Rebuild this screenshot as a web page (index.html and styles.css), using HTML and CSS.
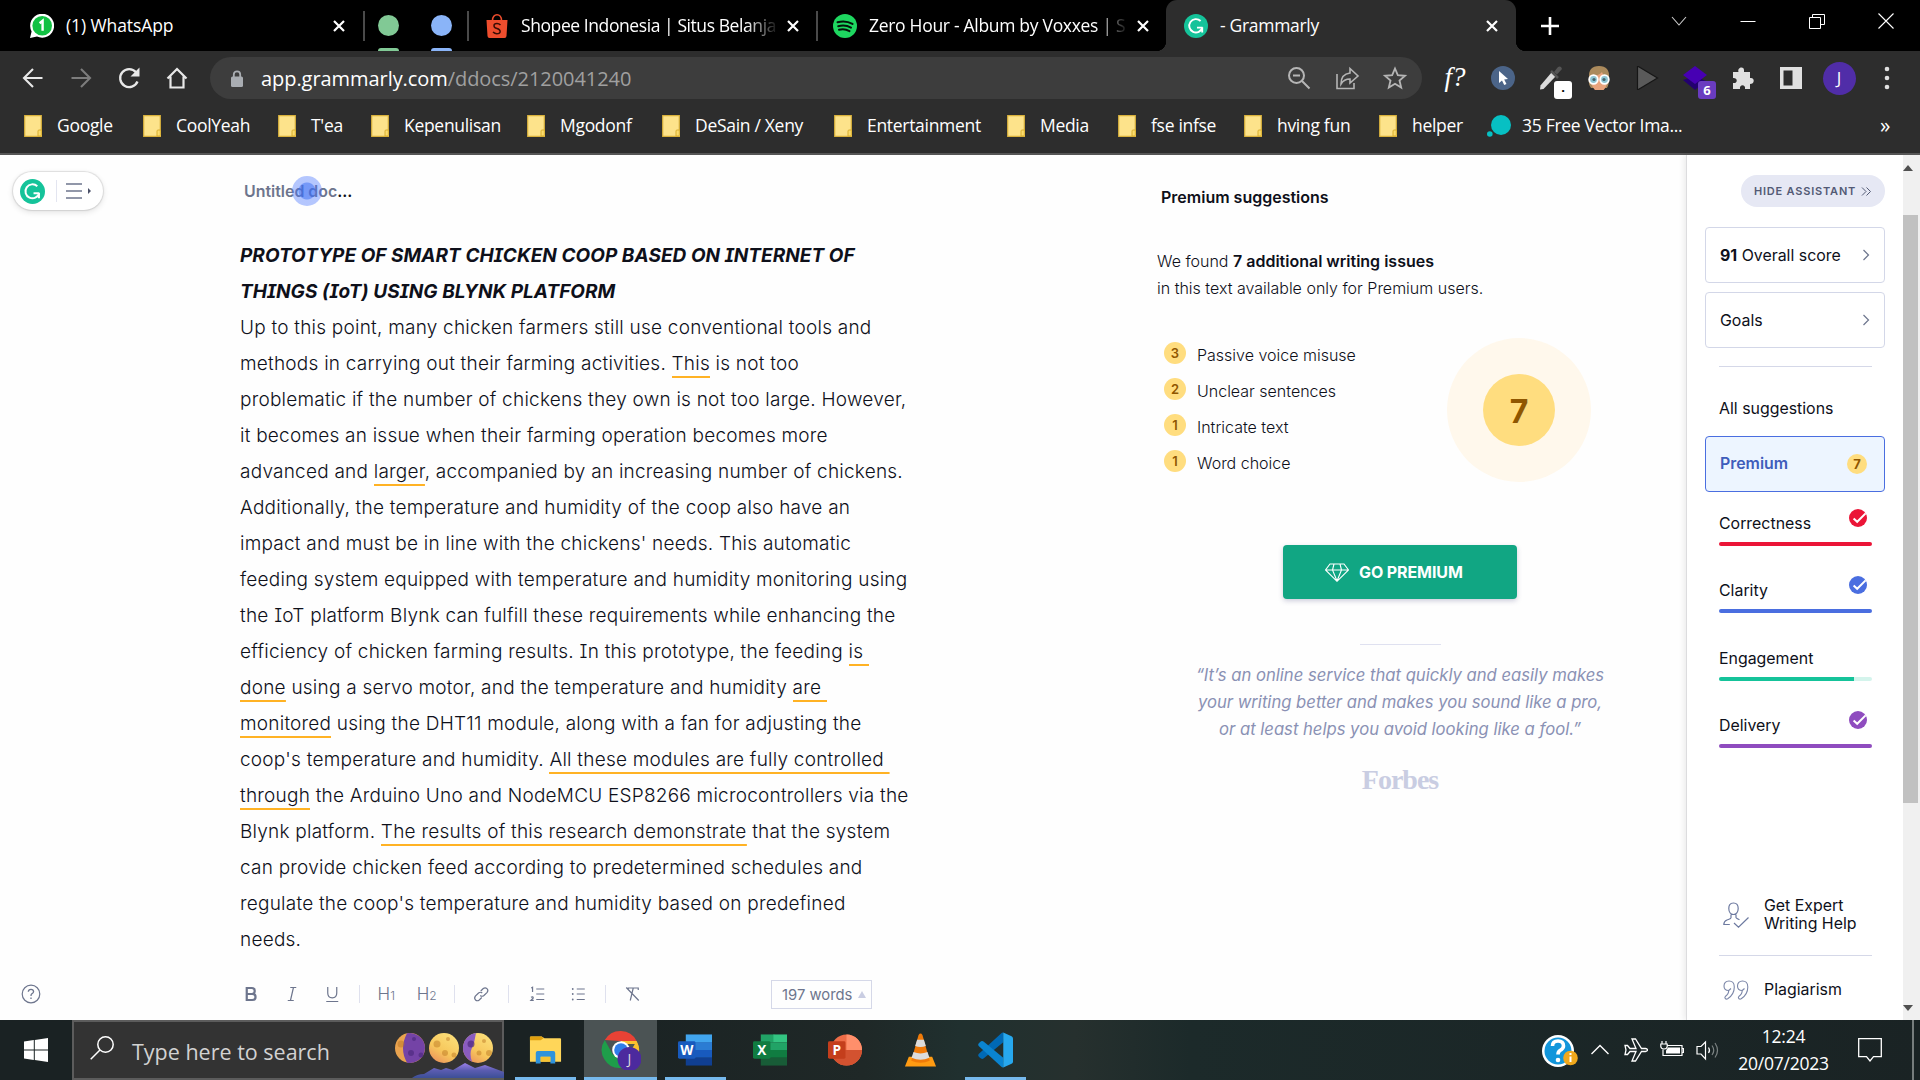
FILE: index.html
```html
<!DOCTYPE html>
<html lang="en">
<head>
<meta charset="utf-8">
<title>Grammarly</title>
<link rel="stylesheet" href="styles.css">
</head>
<body>
<svg class="defs" width="0" height="0">
  <defs>
    <symbol id="close" viewBox="0 0 14 14"><path d="M2 2l10 10M12 2L2 12" stroke="#fff" stroke-width="2.2" fill="none"/></symbol>
    <symbol id="folder" viewBox="0 0 18 22"><path d="M.7.7h16.6v14.5l1 .8v5.3H.7z" fill="#fde38b" stroke="#d9b13b" stroke-width="1.2"/><path d="M14 21v-5q0-1 1-1h2.3v5q0 1-1 1z" fill="#fbdc6e" stroke="#d9ae2e"/></symbol>
    <symbol id="glogo" viewBox="0 0 24 24"><circle cx="12" cy="12" r="12" fill="#15c39a"/><path d="M16.6 7A6.7 6.7 0 1 0 18.4 13.6" fill="none" stroke="#fff" stroke-width="1.9"/><path d="M13 13.6h5.6M18.2 13.4v5" fill="none" stroke="#fff" stroke-width="1.9"/></symbol>
    <symbol id="check" viewBox="0 0 18 18"><circle cx="9" cy="9" r="9"/><path d="M4.6 9.4l3.6 3.4L16.6 4.4" fill="none" stroke="#fff" stroke-width="2"/></symbol>
    <symbol id="chev" viewBox="0 0 8 12"><path d="M1.5 1L6.5 6l-5 5" fill="none" stroke="#6d758d" stroke-width="1.2"/></symbol>
  </defs>
</svg>

<header class="chrome">
  <div class="tabs">
    <div class="tab tab-wa">
      <svg class="fav" viewBox="0 0 24 24"><path d="M0 24l1.6-6.500A12 12 0 1 1 7 22.600z" fill="#fff"/><circle cx="12.200" cy="11.800" r="9.800" fill="#12c143"/><path d="M9.600 9.200l3-2.400v10" stroke="#fff" stroke-width="2.400" fill="none"/></svg>
      <span class="tab-title t-wa">(1) WhatsApp</span>
      <svg class="x"><use href="#close"/></svg>
    </div>
    <div class="group"><i class="dot green"></i><i class="dot blue"></i></div>
    <div class="tab tab-shopee">
      <svg class="fav" viewBox="0 0 24 24"><path d="M1.500 6h21l-1 16q-.1 2-2 2h-15q-1.900 0-2-2z" fill="#ee4d2d"/><path d="M7.500 6.500C7.500 3 9.500.8 12 .8s4.500 2.200 4.500 5.700" fill="none" stroke="#ee4d2d" stroke-width="1.600"/><path d="M15.500 11q-1.500-1.500-3.500-1.500c-4 0-4 4 0 5s4.500 5.200-.2 5.200q-2 0-3.800-1.700" fill="none" stroke="#3a0d05" stroke-width="1.500"/></svg>
      <span class="tab-title t-shopee fade">Shopee Indonesia | Situs Belanja</span>
      <svg class="x"><use href="#close"/></svg>
    </div>
    <div class="tab tab-spotify">
      <svg class="fav" viewBox="0 0 24 24"><circle cx="12" cy="12" r="12" fill="#1ed760"/><path d="M4.500 8.300q8-2.300 15 1.600M5.200 12.200q7-2 12.800 1.400M6 15.800q5.500-1.500 10.500 1.300" fill="none" stroke="#04140a" stroke-width="2" stroke-linecap="round"/></svg>
      <span class="tab-title t-spotify fade">Zero Hour - Album by Voxxes | S</span>
      <svg class="x"><use href="#close"/></svg>
    </div>
    <div class="tab tab-active">
      <svg class="fav"><use href="#glogo"/></svg>
      <span class="tab-title t-gram">- Grammarly</span>
      <svg class="x"><use href="#close"/></svg>
    </div>
    <svg class="plus" viewBox="0 0 18 18"><path d="M9 0v18M0 9h18" stroke="#fff" stroke-width="2.600"/></svg>
    <div class="winctl">
      <svg viewBox="0 0 16 16"><path d="M1 4l7 8 7-8" fill="none" stroke="#ccc" stroke-width="1.100"/></svg>
      <svg viewBox="0 0 16 16"><path d="M.5 8.500h15" stroke="#fff"/></svg>
      <svg viewBox="0 0 16 16"><path d="M.5 4.500h11v11H.5zM3.500 4V1.500h12v10H12" fill="none" stroke="#fff"/></svg>
      <svg viewBox="0 0 16 16"><path d="M.5.500l15 15M15.500.500l-15 15" stroke="#fff" stroke-width="1.100"/></svg>
    </div>
  </div>

  <div class="toolbar">
    <div class="nav">
      <svg viewBox="0 0 24 24"><path d="M21.500 12H3M12 3l-9 9 9 9" fill="none" stroke="#e8e8e8" stroke-width="2.100"/></svg>
      <svg viewBox="0 0 24 24"><path d="M2.500 12H21M12 3l9 9-9 9" fill="none" stroke="#7d7d7d" stroke-width="2.100"/></svg>
      <svg viewBox="0 0 24 24"><path d="M20.500 15.500A9 9 0 1 1 19 6.200" fill="none" stroke="#e8e8e8" stroke-width="2.300"/><path d="M22.500 1.500v9h-9z" fill="#e8e8e8"/></svg>
      <svg viewBox="0 0 24 24"><path d="M2.500 12.500L12 3l9.500 9.500M5.500 10.500v11h13v-11" fill="none" stroke="#e8e8e8" stroke-width="2.200"/></svg>
    </div>
    <div class="omnibox">
      <svg class="lock" viewBox="0 0 14 18"><rect x="1" y="7" width="12" height="10.500" rx="1.500" fill="#a9adb2"/><path d="M3.800 8V5a3.200 3.200 0 0 1 6.400 0v3" fill="none" stroke="#a9adb2" stroke-width="1.800"/></svg>
      <span class="url">app.grammarly.com<span>/ddocs/2120041240</span></span>
      <div class="obicons">
        <svg viewBox="0 0 24 24"><circle cx="9.500" cy="9.500" r="7.500" fill="none" stroke="#b5b5b5" stroke-width="2"/><path d="M15 15l7.500 7.500M6 9.500h7" stroke="#b5b5b5" stroke-width="2" fill="none"/></svg>
        <svg viewBox="0 0 24 24"><path d="M2 8v14.500h17V17" fill="none" stroke="#b5b5b5" stroke-width="1.600"/><path d="M15 2.500l8 7.500-8 7v-4q-6 0-9 5 0-10 9-11z" fill="none" stroke="#b5b5b5" stroke-width="1.600"/></svg>
        <svg viewBox="0 0 24 24"><path d="M12 2.500l2.800 6.700 7.200.6-5.500 4.700 1.700 7.100L12 17.800l-6.200 3.800 1.700-7.100L2 9.800l7.200-.6z" fill="none" stroke="#b5b5b5" stroke-width="1.800"/></svg>
      </div>
    </div>
    <div class="exts">
      <span class="fq">f?</span>
      <svg viewBox="0 0 24 24"><circle cx="12" cy="12" r="12" fill="#4b6488"/><path d="M8 5l9 8-3.800.5 2.300 4.500-2.300 1-2.200-4.600L8 17z" fill="#fff"/></svg>
      <span class="dropper"><svg viewBox="0 0 24 24"><path d="M12.500 6.500l4 4L4.500 23l-3.500.500.5-4z" fill="#dcdcdc"/><path d="M12 5l7 7" stroke="#555" stroke-width="2.500"/><path d="M15 6l4-5q3-1.500 4 2l-5 5.500z" fill="#555"/></svg><b class="badge white">.</b></span>
      <svg viewBox="0 0 24 24"><path d="M2 12Q1 0 12 0t10 12q0 7-2 10L4 22Q1 18 2 12z" fill="#ab8a5c"/><path d="M4 10q8 0 11-4 1 4 5 4v6q-1 9-8 10-6-1-8-10z" fill="#e9a47d"/><circle cx="6.500" cy="13.500" r="4.300" fill="#8fc6d4" stroke="#fff" stroke-width="1.800"/><circle cx="17.500" cy="13.500" r="4.300" fill="#8fc6d4" stroke="#fff" stroke-width="1.800"/><circle cx="7" cy="13.500" r="1.600" fill="#47636b"/><circle cx="17" cy="13.500" r="1.600" fill="#47636b"/></svg>
      <svg viewBox="0 0 24 24"><path d="M2.500 0l20 12-20 12z" fill="#5a5a5a" stroke="#161616" stroke-width="1.200"/></svg>
      <span class="gem"><svg viewBox="0 0 24 24"><path d="M0 14l12-4 11 5-11 9z" fill="#230070"/><path d="M12 0l12 9-12 9L0 9z" fill="#4700b3"/></svg><b class="badge purple">6</b></span>
      <svg viewBox="0 0 24 24"><path d="M2 6h5.500C6 1 13 0 13 4v2h6v6c5-1 5 6 0 6v5h-5c1-5-6-5-5 0H2v-6c5 1 5-5.500 0-5z" fill="#e0e0e0"/></svg>
      <svg viewBox="0 0 24 24"><path d="M1 1h22v22H1zM4.500 4.500v15h9v-15z" fill="#e0e0e0" fill-rule="evenodd"/></svg>
      <span class="avatar">J</span>
      <svg viewBox="0 0 24 24"><g fill="#e0e0e0"><circle cx="12" cy="3" r="2.300"/><circle cx="12" cy="12" r="2.300"/><circle cx="12" cy="21" r="2.300"/></g></svg>
    </div>
  </div>

  <div class="bookmarks">
    <div class="bm"><svg><use href="#folder"/></svg><span>Google</span></div>
    <div class="bm"><svg><use href="#folder"/></svg><span>CoolYeah</span></div>
    <div class="bm"><svg><use href="#folder"/></svg><span>T'ea</span></div>
    <div class="bm"><svg><use href="#folder"/></svg><span>Kepenulisan</span></div>
    <div class="bm"><svg><use href="#folder"/></svg><span>Mgodonf</span></div>
    <div class="bm"><svg><use href="#folder"/></svg><span>DeSain / Xeny</span></div>
    <div class="bm"><svg><use href="#folder"/></svg><span>Entertainment</span></div>
    <div class="bm"><svg><use href="#folder"/></svg><span>Media</span></div>
    <div class="bm"><svg><use href="#folder"/></svg><span>fse infse</span></div>
    <div class="bm"><svg><use href="#folder"/></svg><span>hving fun</span></div>
    <div class="bm"><svg><use href="#folder"/></svg><span>helper</span></div>
    <div class="bm vec"><svg viewBox="0 0 24 24"><circle cx="14" cy="11" r="10" fill="#07c0c3"/><circle cx="2.800" cy="20" r="2.800" fill="#07c0c3"/></svg><span>35 Free Vector Ima...</span></div>
    <span class="more">»</span>
  </div>
</header>

<main class="page">
  <aside class="rail">
    <div class="pill">
      <svg class="g"><use href="#glogo"/></svg>
      <i></i>
      <svg class="menu" viewBox="0 0 26 18"><path d="M0 2h16M0 9h16M0 16h16" stroke="#6d758d" stroke-width="1.300"/><path d="M22 6l3 3-3 3z" fill="#4a5068"/></svg>
    </div>
    <svg class="help" viewBox="0 0 20 20"><circle cx="10" cy="10" r="8.800" fill="none" stroke="#6d758d" stroke-width="1.200"/><path d="M7.300 7.800Q7.500 5.300 10 5.300t2.600 2.300Q12.600 9 10.800 9.800 10 10.300 10 12M10 13.600v1.400" fill="none" stroke="#6d758d" stroke-width="1.300"/></svg>
  </aside>

  <section class="doc">
    <div class="doc-title">Untitled doc<b>...</b><i class="pointer"></i></div>
    <div class="editor">
      <p class="heading">PROTOTYPE OF SMART CHICKEN COOP BASED ON INTERNET OF<br>THINGS (IoT) USING BLYNK PLATFORM</p>
      <p>Up to this point, many chicken farmers still use conventional tools and<br>methods in carrying out their farming activities. <u>This</u> is not too<br>problematic if the number of chickens they own is not too large. However,<br>it becomes an issue when their farming operation becomes more<br>advanced and <u>larger</u>, accompanied by an increasing number of chickens.<br>Additionally, the temperature and humidity of the coop also have an<br>impact and must be in line with the chickens' needs. This automatic<br>feeding system equipped with temperature and humidity monitoring using<br>the IoT platform Blynk can fulfill these requirements while enhancing the<br>efficiency of chicken farming results. In this prototype, the feeding <u>is&nbsp;</u><br><u>done</u> using a servo motor, and the temperature and humidity <u>are&nbsp;</u><br><u>monitored</u> using the DHT11 module, along with a fan for adjusting the<br>coop's temperature and humidity. <u>All these modules are fully controlled&nbsp;</u><br><u>through</u> the Arduino Uno and NodeMCU ESP8266 microcontrollers via the<br>Blynk platform. <u>The results of this research demonstrate</u> that the system<br>can provide chicken feed according to predetermined schedules and<br>regulate the coop's temperature and humidity based on predefined<br>needs.</p>
    </div>
    <div class="format">
      <svg viewBox="0 0 40 24"><path d="M15.500 6h5q3 0 3 3t-3 3h-5zM15.500 12h5.500q3.300 0 3.300 3t-3.300 3h-5.500z" fill="none" stroke="#6d758d" stroke-width="2.200"/></svg>
      <svg viewBox="0 0 40 24"><path d="M18 5.500h6M15.500 18.500h6M21.200 5.500l-3 13" fill="none" stroke="#6d758d" stroke-width="1.200"/></svg>
      <svg viewBox="0 0 40 24"><path d="M15.500 5v6q0 4.800 4.500 4.800t4.500-4.800V5M14 19.500h12" fill="none" stroke="#6d758d" stroke-width="1.200"/></svg>
      <i></i>
      <span class="h">H<small>1</small></span>
      <span class="h">H<small>2</small></span>
      <i></i>
      <svg viewBox="0 0 40 24"><path d="M19.500 9l2.500-2.500q2-1.500 3.700.1t.2 3.700l-3.200 3.200q-2 1.500-3.700 0M20.500 15.500L18 18q-2 1.500-3.700 0t-.2-3.800l3.200-3.200q2-1.500 3.700 0" fill="none" stroke="#6d758d" stroke-width="1.200"/></svg>
      <i class="sep-list"></i>
      <svg viewBox="0 0 40 24"><path d="M19 7h8M19 12h8M19 17.500h8M14 6l1.300-.8V10M13.700 15.300q2.300-1 2.300.6L13.700 18.300H16.500" fill="none" stroke="#6d758d" stroke-width="1.200"/></svg>
      <svg viewBox="0 0 40 24"><path d="M18.500 7h8M18.500 12h8M18.500 17.500h8" stroke="#6d758d" stroke-width="1.200"/><g fill="#6d758d"><circle cx="14.500" cy="7" r=".9"/><circle cx="14.500" cy="12" r=".9"/><circle cx="14.500" cy="17.500" r=".9"/></g></svg>
      <i></i>
      <svg viewBox="0 0 40 24"><path d="M16 8V6h10v2M21 6l-3 12.500M14 5.500l12.500 13" fill="none" stroke="#6d758d" stroke-width="1.200"/></svg>
      <span class="words"><span>197 words</span><svg viewBox="0 0 8 7"><path d="M4 0l4 7H0z" fill="#c9cde2"/></svg></span>
    </div>
  </section>

  <section class="premium">
    <h2>Premium suggestions</h2>
    <p class="found">We found <b>7 additional writing issues</b><br><span>in this text available only for Premium users.</span></p>
    <div class="issues">
      <ul>
        <li><b>3</b><span>Passive voice misuse</span></li>
        <li><b>2</b><span>Unclear sentences</span></li>
        <li><b>1</b><span>Intricate text</span></li>
        <li><b>1</b><span>Word choice</span></li>
      </ul>
      <div class="ring"><div>7</div></div>
    </div>
    <div class="promo">
      <div class="go"><svg viewBox="0 0 24 19"><path d="M5 1h14l4.500 6L12 18.300.5 7zM.5 7h23M9 1L7.500 7 12 18l4.500-11L15 1" fill="none" stroke="#fff" stroke-width="1.100"/></svg><span>GO PREMIUM</span></div>
      <hr>
      <blockquote>“It’s an online service that quickly and easily makes<br>your writing better and makes you sound like a pro,<br>or at least helps you avoid looking like a fool.”</blockquote>
      <div class="forbes">Forbes</div>
    </div>
  </section>

  <aside class="side">
    <div class="hide"><span>HIDE ASSISTANT</span><svg viewBox="0 0 10 9"><path d="M1 .5l4 4-4 4M5.500.5l4 4-4 4" fill="none" stroke="#535a75"/></svg></div>
    <div class="card"><span><b>91</b> Overall score</span><svg><use href="#chev"/></svg></div>
    <div class="card"><span>Goals</span><svg><use href="#chev"/></svg></div>
    <hr>
    <div class="all">All suggestions</div>
    <div class="card on"><span>Premium</span><em>7</em></div>
    <div class="metric red"><div><span>Correctness</span><svg><use href="#check"/></svg></div><i><s></s></i></div>
    <div class="metric blu"><div><span>Clarity</span><svg><use href="#check"/></svg></div><i><s></s></i></div>
    <div class="metric grn"><div><span>Engagement</span></div><i><s style="width:88.200%"></s></i></div>
    <div class="metric pur"><div><span>Delivery</span><svg><use href="#check"/></svg></div><i><s></s></i></div>
    <div class="tool expert"><svg viewBox="0 0 26 26"><path d="M10.500 1C6.500 1 5.800 4 5.800 6.500c0 3.500 2 6 4.700 6s4.700-2.500 4.700-6C15.200 4 14.500 1 10.500 1zM8 12.500v3.200c0 1-1.500 1.300-4 2.300C1.500 19 .8 20.500.8 22.500h6M13 12.500v3q0 .8 3.500 2.200M11 21l4.500 4.200L25.500 15.500" fill="none" stroke="#6d7aa0" stroke-width="1.200"/></svg><span>Get Expert<br>Writing Help</span></div>
    <hr>
    <div class="tool"><svg viewBox="0 0 26 20"><path id="q" d="M6 1C2.800 1 1 3 1 6s2 4.500 4.700 4.500Q5.800 14 2.300 16.500q-1 1.200.2 2.300 1 .7 2.200 0C9 16 11.300 12 11.300 7 11.300 3 9 1 6 1zM8 8.500l-2.300 2" fill="none" stroke="#7b86a8" stroke-width="1.100"/><use href="#q" x="13.500"/></svg><span>Plagiarism</span></div>
  </aside>
  <div class="scroll">
    <svg viewBox="0 0 10 6"><path d="M0 6l5-6 5 6z" fill="#505050"/></svg>
    <div></div>
    <svg viewBox="0 0 10 6"><path d="M0 0l5 6 5-6z" fill="#505050"/></svg>
  </div>
</main>

<footer class="taskbar">
  <div class="start"><svg viewBox="0 0 24 24"><path d="M0 3.400L9.800 2v9.500H0zM10.800 1.900L24 0v11.500H10.800zM0 12.500h9.800V22L0 20.600zM10.800 12.500H24V24l-13.200-1.900z" fill="#fff"/></svg></div>
  <div class="search">
    <svg class="mag" viewBox="0 0 24 24"><circle cx="15.500" cy="8.500" r="7.700" fill="none" stroke="#fff" stroke-width="1.500"/><path d="M10 14L.7 23.300" stroke="#fff" stroke-width="1.500"/></svg>
    <span>Type here to search</span>
    <svg class="moons" viewBox="0 0 110 56">
      <defs>
        <linearGradient id="m1" x1="0" y1="1" x2=".6" y2="0"><stop offset="0" stop-color="#e8865c"/><stop offset=".5" stop-color="#f7c75c"/><stop offset="1" stop-color="#fbdc76"/></linearGradient>
        <linearGradient id="m2" x1="0" y1="0" x2="0" y2="1"><stop offset="0" stop-color="#9a80e8"/><stop offset=".5" stop-color="#5a5cb0"/><stop offset="1" stop-color="#3c4f96"/></linearGradient>
      </defs>
      <circle cx="16" cy="26" r="15" fill="#e9a34f"/><path d="M13 11.300a15 15 0 1 1 0 29.400q-8-14 0-29.400z" fill="#7443a6"/>
      <circle cx="50" cy="26" r="15" fill="url(#m1)"/>
      <circle cx="84" cy="26" r="15" fill="url(#m1)"/><path d="M82 11a15 15 0 0 0-4 28.700q-3-8 0-14 3-7 4-14.700z" fill="#8a5cc0"/>
      <g fill="#b8721f" opacity=".45"><circle cx="7" cy="22" r="3.500"/><circle cx="43" cy="22" r="3.500"/><circle cx="51" cy="31" r="3"/><circle cx="54" cy="17" r="2"/><circle cx="60" cy="33" r="2.500"/><circle cx="85" cy="31" r="2.500"/><circle cx="95" cy="31" r="3"/><circle cx="90" cy="19" r="2"/></g>
      <g fill="#4f2a80" opacity=".7"><circle cx="17" cy="31" r="3"/><circle cx="27" cy="33" r="2.500"/><circle cx="20" cy="17" r="2"/><circle cx="77" cy="22" r="3.500"/></g>
      <path d="M18 56q5-4 12-4l10-6 7 2 5-2 7 2 12-7 10 5 10-3 19 7v6z" fill="url(#m2)"/>
    </svg>
  </div>
  <div class="apps">
    <div class="app run"><svg viewBox="0 0 36 36"><path d="M2 5q0-1 1-1h11l3 2h16q1 0 1 1v23H2z" fill="#ffd659"/><path d="M2 8V5q0-1 1-1h11l2 2-3 2z" fill="#e0a00f"/><path d="M8 32V21q0-2 2-2h16q2 0 2 2v11h-5v-7H13v7z" fill="#2f93dc"/><path d="M13 30v-5h10v5z" fill="#f6c333"/></svg></div>
    <div class="app run wide active"><svg viewBox="0 0 40 40"><path d="M3.800 10A18 18 0 0 1 35.600 11H19z" fill="#e94235"/><path d="M35.600 11A18 18 0 0 1 20 38l8-14z" fill="#fbc02d"/><path d="M3.800 10A18 18 0 0 0 20 38l7-13H12z" fill="#1e9e4a"/><path d="M20 11h15.600l1 3H20z" fill="#fbc02d"/><circle cx="20" cy="20" r="8.800" fill="#fff"/><circle cx="20" cy="20" r="6.800" fill="#2f7de9"/><circle cx="28.500" cy="29" r="12" fill="#4c2a9e"/><text x="28.500" y="34" class="jt">J</text></svg></div>
    <div class="app run"><svg viewBox="0 0 36 36"><path d="M8 2h27v8.500H8z" fill="#41a5ee"/><path d="M8 10h27v8H8z" fill="#2b7cd3"/><path d="M8 18h27v8H8z" fill="#185abd"/><path d="M8 26h27v8H8z" fill="#103f91"/><rect y="9" width="18" height="18" rx="1.500" fill="#185abd"/><text x="9" y="23" class="ot">W</text></svg></div>
    <div class="app"><svg viewBox="0 0 36 36"><path d="M8 2h14v8H8z" fill="#21a366"/><path d="M21 2h14v8H21z" fill="#33c481"/><path d="M8 10h27v8H8z" fill="#21a366"/><path d="M8 18h27v8H8z" fill="#107c41"/><path d="M8 26h27v8H8z" fill="#185c37"/><rect y="9" width="18" height="18" rx="1.500" fill="#107c41"/><text x="9" y="23" class="ot">X</text></svg></div>
    <div class="app"><svg viewBox="0 0 36 36"><circle cx="19" cy="18" r="16" fill="#ed6c47"/><path d="M19 2a16 16 0 0 1 16 16H19z" fill="#ff8f6b"/><path d="M3 18a16 16 0 0 0 32 0z" fill="#d35230"/><rect y="9" width="18" height="18" rx="1.500" fill="#c43e1c"/><text x="9" y="23" class="ot">P</text></svg></div>
    <div class="app"><svg viewBox="0 0 36 36"><path d="M6 25h24l4 10H2z" fill="#ff9b12"/><path d="M16 2.500q2-3 4 0l7.500 26.500q-9.500 4-19 0z" fill="#f07a08"/><path d="M14.500 7.500h7l2 6.500q-5.500 2-11 0zM10.800 20q7.200 3 14.400 0l2 6q-9.200 4-18.400 0z" fill="#dcdcdc"/></svg></div>
    <div class="app run"><svg viewBox="0 0 36 36"><path d="M26 0v10L6 26.500Q4 28 2 26L.7 24.700q-1-1.200 0-2.500L24 .7q1-.9 2-.7z" fill="#0069b5"/><path d="M26 36V26L6 9.500Q4 8 2 10L.7 11.300q-1 1.200 0 2.500L24 35.300q1 .9 2 .7z" fill="#0a84d0"/><path d="M26 0l8.500 3.800Q36 4.500 36 6v24q0 1.500-1.500 2.200L26 36z" fill="#27a8ee"/></svg></div>
  </div>
  <div class="tray">
    <svg class="qm" viewBox="0 0 36 36"><circle cx="16" cy="17" r="16" fill="#fff"/><circle cx="16" cy="17" r="13.500" fill="#1296db"/><path d="M10.500 12Q10.500 7 16 7t5.500 5Q21.500 14.500 18 16.500 16 17.800 16 20.500" fill="none" stroke="#fff" stroke-width="3.600"/><circle cx="16" cy="26" r="2.300" fill="#fff"/><circle cx="28.500" cy="24" r="7.300" fill="#f0a81c"/><path d="M28.500 22.500V28M28.500 19v2" stroke="#fff" stroke-width="2"/></svg>
    <svg viewBox="0 0 24 24"><path d="M3.500 16L12 7.500l8.500 8.500" fill="none" stroke="#fff" stroke-width="1.400"/></svg>
    <svg viewBox="0 0 24 24"><path d="M1 7.500h2.500L6 10.500h6L8 1h3.500l6 9.500h4q2 .4 2 1.500t-2 1.500h-4l-6 9.500H8l4-9.500H6l-2.500 3H1L2 12z" fill="none" stroke="#fff" stroke-width="1.300"/></svg>
    <svg viewBox="0 0 24 24"><path d="M7 7.500h15v10H3v-6M22 10.500h1.500v4H22" fill="none" stroke="#fff" stroke-width="1.200"/><path d="M8 9.500h12v6H6v-3z" fill="#fff"/><path d="M2 3v3M6 3v3M.8 6h6.400v2.500Q7 11 4 11T.8 8.500z" fill="none" stroke="#fff" stroke-width="1.200"/></svg>
    <svg viewBox="0 0 24 24"><path d="M1 8.500h4L9.500 4v17L5 16H1zM12.500 9.500q2 3 0 5.500" fill="none" stroke="#fff" stroke-width="1.200"/><path d="M16 7.500q3.500 5 0 9.500M19 5q5 7.500 0 14.500" fill="none" stroke="#7b8282" stroke-width="1.200"/></svg>
    <div class="clock"><span>12:24</span><span>20/07/2023</span></div>
    <svg class="note" viewBox="0 0 24 24"><path d="M.7.700h22.600v18H15.500L12 23l-3.500-4.300H.7z" fill="none" stroke="#fff" stroke-width="1.300"/></svg>
    <i></i>
  </div>
</footer>
</body>
</html>
```
FILE: styles.css
```css
* { box-sizing: border-box; }
body { margin: 0; width: 1920px; height: 1080px; overflow: hidden; background: #fefefe; font-family: Inter, sans-serif; color: #0e101a; display: flex; flex-direction: column; }
.defs { position: absolute; }
svg { display: block; flex: none; }
p, h2, ul, blockquote { margin: 0; padding: 0; }

/* browser chrome */
.chrome { height: 155px; background: #2d2d2d; border-bottom: 2px solid #565656; font-family: "Open Sans", sans-serif; color: #fff; flex: none; }
.tabs { height: 51px; background: #000; display: flex; align-items: center; }
.tab { display: flex; align-items: center; height: 51px; }
.fav { width: 24px; height: 24px; margin-right: 12px; }
.tab-title { flex: 1; min-width: 0; overflow: hidden; white-space: nowrap; font-size: 17.500px; letter-spacing: -.3px; padding-bottom: 1px; }
.t-wa { letter-spacing: -.1px; }
.t-shopee { letter-spacing: -.42px; }
.fade { -webkit-mask-image: linear-gradient(90deg, #000 87%, transparent); mask-image: linear-gradient(90deg, #000 87%, transparent); }
.x { width: 14px; height: 14px; }
.tab-wa { width: 363px; padding: 0 17px 0 30px; }
.group { width: 106px; height: 30px; border: solid #4a4a4a; border-width: 0 2px; display: flex; justify-content: space-between; padding: 4px 15px 0 13px; }
.dot { position: relative; width: 21px; height: 21px; border-radius: 50%; }
.dot::after { content: ""; position: absolute; left: 0; top: 33px; width: 21px; height: 3px; border-radius: 3px 3px 0 0; background: inherit; }
.green { background: #81c995; }
.blue { background: #8ab4f8; }
.tab-shopee { width: 348px; padding: 0 17px 0 16px; }
.tab-shopee .tab-title, .tab-spotify .tab-title { margin-right: 7px; }
.tab-spotify { width: 349px; padding: 0 16px 0 15px; }
.tab-spotify::before { content: ""; width: 2px; height: 30px; margin-left: -16px; margin-right: 15px; background: #4a4a4a; }
.tab-active { width: 350px; background: #2d2d2d; border-radius: 11px 11px 0 0; padding: 0 17px 0 18px; position: relative; }
.tab-active::before, .tab-active::after { content: ""; position: absolute; bottom: 0; width: 10px; height: 10px; background: radial-gradient(circle at 0 0, #000 10px, #2d2d2d 10.500px); left: -10px; }
.tab-active::after { left: auto; right: -10px; background: radial-gradient(circle at 100% 0, #000 10px, #2d2d2d 10.500px); }
.plus { width: 18px; height: 18px; margin-left: 25px; }
.winctl { display: flex; gap: 53px; margin-left: 112px; margin-top: -9px; }
.winctl svg { width: 16px; height: 16px; }

.toolbar { display: flex; height: 54px; align-items: center; }
.nav { display: flex; padding: 0 9px; }
.nav svg, .obicons svg, .exts > * { width: 48px; height: 24px; }
.omnibox { width: 1212px; height: 42px; border-radius: 21px; background: #3d3d3d; display: flex; align-items: center; padding: 0 3px 0 20px; }
.lock { width: 14px; height: 19px; }
.url { margin-left: 17px; flex: 1; font-size: 20px; letter-spacing: -.06px; }
.url span { color: #a0a0a0; }
.obicons { display: flex; }
.exts { display: flex; margin-left: 9px; align-items: center; }
.fq { font: italic 27px/22px "Liberation Serif", serif; text-align: center; }
.dropper, .gem { position: relative; display: flex; justify-content: center; }
.dropper svg, .gem svg { width: 24px; height: 24px; }
.badge { position: absolute; left: 27px; top: 15px; width: 18px; height: 18px; border-radius: 3px; font: bold 13px/18px "Open Sans", sans-serif; text-align: center; }
.white { background: #fff; color: #000; line-height: 13px; }
.purple { background: #6a3cc0; }
.exts .avatar { width: 33px; height: 33px; margin: 0 7.500px; border-radius: 50%; background: #502da8; font-size: 17px; line-height: 32px; text-align: center; }

.bookmarks { display: flex; height: 48px; padding-left: 24px; align-items: center; font-size: 17.500px; letter-spacing: -.3px; margin-top: -3px; white-space: nowrap; }
.bm { display: flex; align-items: center; width: 135px; }
.bm svg { width: 18px; height: 22px; margin-right: 15px; }
.bm span { padding-bottom: 2px; }
.bm:nth-child(1) { width: 119px; }
.bm:nth-child(3) { width: 93px; }
.bm:nth-child(4) { width: 156px; }
.bm:nth-child(6) { width: 172px; }
.bm:nth-child(7) { width: 173px; }
.bm:nth-child(8) { width: 111px; }
.bm:nth-child(9) { width: 126px; }
.bm:nth-child(11) { width: 108px; }
.bm.vec { width: 393px; }
.bm.vec svg { width: 24px; height: 24px; margin-right: 11px; }
.more { font-size: 21px; padding-bottom: 3px; }

/* document page */
.page { display: flex; height: 865px; }
.rail { width: 240px; padding: 17px 0 16px 13px; display: flex; flex-direction: column; justify-content: space-between; }
.pill { width: 90px; height: 38px; border-radius: 19px; background: #fff; box-shadow: 0 0 1px 1px rgba(0,0,0,.1), 0 2px 6px rgba(0,0,0,.12); display: flex; align-items: center; padding-left: 7px; }
.g { width: 25px; height: 25px; }
.pill i { width: 1px; height: 22px; background: #e3e5f0; margin: 0 9px 0 11px; }
.menu { width: 26px; height: 18px; }
.help { width: 20px; height: 20px; margin-left: 8px; }

.doc { width: 917px; }
.doc-title { height: 83px; padding: 27px 0 0 4px; font-size: 15.900px; line-height: 20px; font-weight: 600; color: #6d758d; position: relative; }
.doc-title b { color: #0e101a; font-weight: 600; }
.pointer { position: absolute; left: 52px; top: 21px; width: 30px; height: 30px; border-radius: 50%; background: radial-gradient(circle, rgba(60,110,245,.7) 8px, rgba(70,115,255,.4) 9px); }
.editor { height: 737px; font-size: 19px; font-weight: 300; line-height: 36px; letter-spacing: .23px; white-space: nowrap; font-feature-settings: "cv08"; }
.heading { font-weight: 700; font-style: italic; letter-spacing: .05px; }
.editor u { text-decoration: none; padding-bottom: 3px; background: linear-gradient(#ffb224, #ffb224) bottom / 100% 2px no-repeat; }
.format { display: flex; align-items: center; height: 38px; color: #6d758d; margin-left: -9px; }
.format > svg, .h { width: 40.500px; height: 24px; }
.format > i { width: 1px; height: 18px; background: #dfe1ee; margin: 0 6px 0 6.500px; }
.format > .sep-list { margin-right: 8.500px; }
.h { text-align: center; font-size: 17px; font-weight: 300; line-height: 24px; }
.h small { font-size: 12px; }
.words { margin-left: 119px; width: 101px; height: 29px; border: 1px solid #d5d8e8; display: flex; align-items: center; gap: 6px; padding: 1px 0 0 10px; font-size: 14.800px; white-space: nowrap; }
.words svg { width: 8px; height: 7px; }

.premium { width: 529px; font-size: 16px; font-weight: 300; line-height: 27px; }
.premium h2 { font-size: 16px; line-height: 20px; font-weight: 600; padding: 32px 0 0 4px; height: 93px; }
.found b { font-weight: 600; }
.issues { display: flex; margin-top: 36px; height: 144px; }
.premium ul { width: 290px; padding-left: 7px; list-style: none; margin-top: -1px; }
.premium li { display: flex; height: 36px; }
.premium li b { width: 22px; height: 22px; margin: 5px 11px 0 0; border-radius: 50%; background: #ffdd7f; color: #8f5600; font-size: 13px; font-weight: 600; line-height: 22px; text-align: center; }
.premium li span { margin-top: 5px; }
.ring { width: 144px; height: 144px; border-radius: 50%; background: #fff8ec; padding: 36px; }
.ring div { width: 72px; height: 72px; border-radius: 50%; background: #ffdd7f; color: #8f5600; font-size: 32px; font-weight: 700; line-height: 75px; text-align: center; }
.promo { width: 486px; margin-top: 63px; display: flex; flex-direction: column; align-items: center; }
.go { width: 234px; height: 54px; border-radius: 4px; background: #11a683; box-shadow: 0 2px 5px rgba(60,60,120,.25); display: flex; align-items: center; padding: 0 0 0 42px; gap: 10px; color: #fff; font-weight: 700; letter-spacing: -.1px; }
.go svg { width: 24px; height: 19px; }
.promo hr { width: 81px; height: 1px; border: 0; background: #dfe1f0; margin: 45px 0 17px; }
.promo blockquote { font-style: italic; font-weight: 400; color: #8a91b4; text-align: center; font-size: 16.650px; white-space: nowrap; }
.forbes { margin-top: 22px; font: bold 28px/30px "Liberation Serif", serif; color: #c9cde2; letter-spacing: -1px; }

.side { width: 217px; border-left: 1px solid #dcdcde; box-shadow: -2px 0 6px rgba(0,0,0,.08); background: #fff; padding: 20px 18px 0; font-size: 15.900px; white-space: nowrap; }
.hide { width: 144px; height: 32px; margin-left: 36px; border-radius: 16px; background: #e6e8f4; color: #535a75; font-size: 11px; font-weight: 600; letter-spacing: .8px; display: flex; align-items: center; justify-content: space-between; padding: 0 14px 0 13px; }
.hide svg { width: 10px; height: 9px; }
.card { height: 56px; border: 1px solid #d3d7e8; border-radius: 4px; display: flex; align-items: center; justify-content: space-between; padding: 0 14px 0 14px; margin-top: 9px; }
.hide + .card { margin-top: 20px; }
.card b { font-weight: 700; }
.card svg { width: 8px; height: 12px; }
.side hr { height: 1px; border: 0; background: #d5d8e8; margin: 18px 13px 0 14px; }
.all { height: 69px; padding: 31px 0 0 14px; line-height: 22px; }
.on { margin-top: 0; background: #edf5ff; border-color: #4a6ee0; color: #3f5dbb; font-weight: 600; padding: 0 17px 1px 14px; }
.on em { width: 20px; height: 20px; border-radius: 50%; background: #ffdd7f; color: #8f5600; font: 700 13px/20px Inter, sans-serif; text-align: center; }
.metric { height: 67.300px; padding: 17px 13px 0 14px; }
.metric div { display: flex; justify-content: space-between; height: 33px; }
.metric span { line-height: 20px; margin-top: 5px; color: #0e101a; }
.metric svg { width: 18px; height: 18px; margin-right: 5px; fill: currentColor; }
.metric i { display: block; height: 4px; border-radius: 2px; background: #d4f4ec; overflow: hidden; }
.metric s { display: block; height: 4px; background: currentColor; }
.red { color: #eb1537; }
.blu { color: #4a6ee0; }
.grn { color: #15c39a; }
.pur { color: #8f4cbf; }
.tool { display: flex; align-items: center; gap: 15px; padding: 1px 0 0 18px; line-height: 18px; height: 66px; }
.tool svg { width: 26px; height: 26px; }
.expert { margin-top: 120px; height: 66px; }
.expert + hr { margin-top: 8px; }
.scroll { width: 17px; background: #f0f0f0; display: flex; flex-direction: column; padding: 10px 0 9px; }
.scroll svg { width: 10px; height: 6px; }
.scroll div { width: 15px; height: 588px; margin: 44px 0 202px; background: #c1c1c1; }

/* taskbar */
.taskbar { height: 60px; flex: none; display: flex; background: linear-gradient(90deg, #1a2223 30%, #1f2827 45%, #20302f 50%, #26302e 56%, #1c2a2a 62%, #1a2324); font-family: "Open Sans", sans-serif; color: #fff; }
.start { width: 72px; padding: 18px 24px; }
.start svg { width: 24px; height: 24px; }
.search { width: 432px; border: 2px solid #5c5c5c; background: #333; display: flex; align-items: center; padding-left: 16px; }
.mag { width: 24px; height: 24px; margin-top: -4px; }
.search span { margin-left: 18px; margin-top: 2px; width: 198px; font-size: 21.500px; color: #d2d2d2; white-space: nowrap; }
.moons { width: 110px; height: 56px; margin-left: 64px; }
.apps { display: flex; padding-left: 4px; width: 1032px; }
.app { width: 75px; position: relative; display: flex; justify-content: center; align-items: center; }
.app svg { width: 35px; height: 36px; }
.app.run::after { content: ""; position: absolute; bottom: 0; left: 7px; width: 61px; height: 3px; background: #76b9ed; }
.app.active { background: linear-gradient(#4b5354, #4b5354) center / 73px 100% no-repeat; }
.app.wide::after { left: 1px; width: 73px; }
.app.wide svg { width: 40px; height: 40px; }
.jt { font: 14px "Open Sans", sans-serif; fill: #ddd; text-anchor: middle; }
.ot { font: bold 14px "Open Sans", sans-serif; fill: #fff; text-anchor: middle; }
.tray { display: flex; align-items: center; gap: 12px; width: 384px; }
.tray svg { width: 24px; height: 24px; }
.tray .qm { width: 36px; height: 36px; margin: 3px -2px 0 6px; }
.clock { width: 126px; margin-left: -13px; padding-left: 3px; display: flex; flex-direction: column; align-items: center; font-size: 17.500px; line-height: 27px; letter-spacing: -.25px; }
.tray .note { margin-left: 1px; }
.tray i { width: 2px; height: 60px; background: #777d7d; margin-left: 18px; }
```
